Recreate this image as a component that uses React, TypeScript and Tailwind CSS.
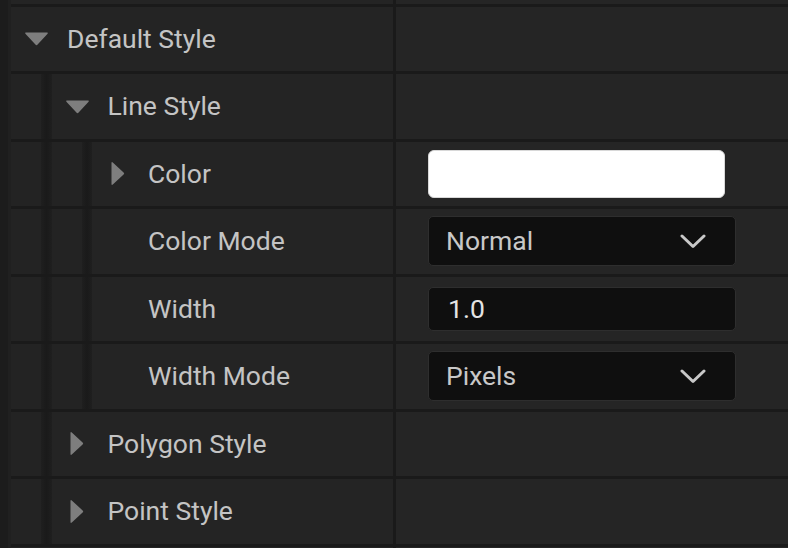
import type { ReactNode } from "react";

const FONT = { fontFamily: "Roboto, 'Liberation Sans', sans-serif" };

function ArrowDown() {
  return (
    <svg width="25" height="15" viewBox="0 0 25 15">
      <path d="M2 1.5 H23 Q24.5 1.5 23.6 2.8 L13.6 13.6 Q12.5 14.8 11.4 13.6 L1.4 2.8 Q0.5 1.5 2 1.5 Z" fill="#7e7e7e" />
    </svg>
  );
}

function ArrowRight() {
  return (
    <svg width="16" height="25" viewBox="0 0 16 25">
      <path d="M1.5 2 V23 Q1.5 24.5 2.8 23.6 L13.6 13.6 Q14.8 12.5 13.6 11.4 L2.8 1.4 Q1.5 0.5 1.5 2 Z" fill="#7e7e7e" />
    </svg>
  );
}

function Chevron() {
  return (
    <svg width="26" height="15" viewBox="0 0 26 15" className="shrink-0">
      <polyline points="2,2 13,12.5 24,2" fill="none" stroke="#c8c8c8" strokeWidth="3" strokeLinecap="round" strokeLinejoin="round" />
    </svg>
  );
}

function Indent() {
  return (
    <div className="flex shrink-0">
      <div className="w-[30px] bg-[#232323]" />
      <div className="w-[10.5px] bg-gradient-to-r from-[#1f1f1f] via-[#1a1a1a] to-[#1f1f1f]" />
    </div>
  );
}

function Row({
  depth,
  label,
  arrow,
  children,
}: {
  depth: number;
  label: string;
  arrow?: "down" | "right";
  children?: ReactNode;
}) {
  return (
    <div className="flex h-[67.5px] shrink-0 border-t-[3px] border-[#1a1a1a]">
      <div className="flex w-[382px] shrink-0">
        {Array.from({ length: depth }).map((_, i) => (
          <Indent key={i} />
        ))}
        <div className="flex flex-1 items-center bg-[#242424] pl-[13px]">
          <span className="flex w-[25px] shrink-0 justify-center">
            {arrow === "down" && <ArrowDown />}
            {arrow === "right" && <ArrowRight />}
          </span>
          <span className="ml-[18px] text-[26.5px] text-[#c4c4c4]">{label}</span>
        </div>
      </div>
      <div className="w-[3px] shrink-0 bg-[#1a1a1a]" />
      <div className="flex flex-1 items-center bg-[#252525] pl-[32px]">{children}</div>
    </div>
  );
}

function Dropdown({ value }: { value: string }) {
  return (
    <div className="flex h-[50px] w-[308px] items-center justify-between rounded-[5px] border border-[#2e2e2e] bg-[#0f0f0f] pl-[17px] pr-[29px]">
      <span className="text-[26.5px] text-[#c8c8c8]">{value}</span>
      <Chevron />
    </div>
  );
}

export default function App() {
  return (
    <div className="flex h-[548px] w-[788px] overflow-hidden bg-[#1a1a1a]" style={FONT}>
      <div className="flex w-[11px] shrink-0">
        <div className="w-[8px] bg-[#1c1c1c]" />
        <div className="w-[3px] bg-[#202020]" />
      </div>
      <div className="flex flex-1 flex-col">
        <div className="flex h-[3.5px] shrink-0">
          <div className="w-[382px] bg-[#242424]" />
          <div className="w-[3px] bg-[#1a1a1a]" />
          <div className="flex-1 bg-[#252525]" />
        </div>
        <Row depth={0} label="Default Style" arrow="down" />
        <Row depth={1} label="Line Style" arrow="down" />
        <Row depth={2} label="Color" arrow="right">
          <div className="h-[48px] w-[297px] rounded-[6px] border border-[#d8d8d8] bg-white" />
        </Row>
        <Row depth={2} label="Color Mode">
          <Dropdown value="Normal" />
        </Row>
        <Row depth={2} label="Width">
          <div className="flex h-[44px] w-[308px] items-center rounded-[5px] border border-[#2e2e2e] bg-[#0f0f0f] pl-[19px]">
            <span className="text-[26.5px] text-[#e4e4e4]">1.0</span>
          </div>
        </Row>
        <Row depth={2} label="Width Mode">
          <Dropdown value="Pixels" />
        </Row>
        <Row depth={1} label="Polygon Style" arrow="right" />
        <Row depth={1} label="Point Style" arrow="right" />
        <Row depth={0} label="" />
      </div>
    </div>
  );
}
